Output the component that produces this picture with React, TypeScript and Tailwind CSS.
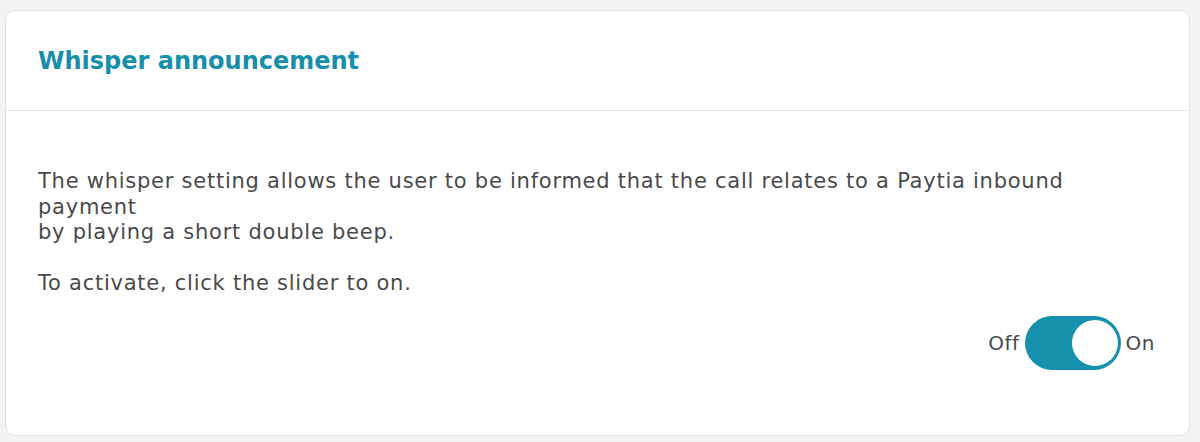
import { useState } from "react";

export default function App() {
  const [on, setOn] = useState(true);

  return (
    <div className="w-[1200px] h-[442px] bg-[#f3f3f3] pt-[10px] pl-[5px] pr-[10px] pb-[6px] font-['DejaVu_Sans',sans-serif]">
      <div className="h-full bg-white border border-[#e2e2e2] rounded-[10px] flex flex-col overflow-hidden">
        {/* Header */}
        <div className="h-[100px] shrink-0 border-b border-[#e2e2e2] flex items-center px-[32px]">
          <h2 className="text-[24px] font-semibold text-[#168fab]">Whisper announcement</h2>
        </div>

        {/* Body */}
        <div className="flex-1 px-[32px] pt-[58px] flex flex-col">
          <p className="text-[21px] leading-[25.5px] tracking-[0.75px] text-[#4a4a4a]">
            The whisper setting allows the user to be informed that the call relates to a Paytia inbound
            <br />
            payment
            <br />
            by playing a short double beep.
          </p>
          <p className="text-[21px] leading-[25.5px] tracking-[0.75px] text-[#4a4a4a] mt-[25px]">To activate, click the slider to on.</p>

          <div className="flex items-center justify-end gap-[5px] mt-[20px] mr-[2px]">
            <span className="text-[20px] tracking-[0.5px] text-[#4a4a4a]">Off</span>
            <button
              onClick={() => setOn(!on)}
              className={`w-[96px] h-[54px] rounded-full flex items-center px-[3px] ${on ? "bg-[#1590ad] justify-end" : "bg-[#cfcfcf] justify-start"}`}
            >
              <span className="w-[46px] h-[46px] rounded-full bg-white block" />
            </button>
            <span className="text-[20px] tracking-[0.5px] text-[#4a4a4a]">On</span>
          </div>
        </div>
      </div>
    </div>
  );
}
